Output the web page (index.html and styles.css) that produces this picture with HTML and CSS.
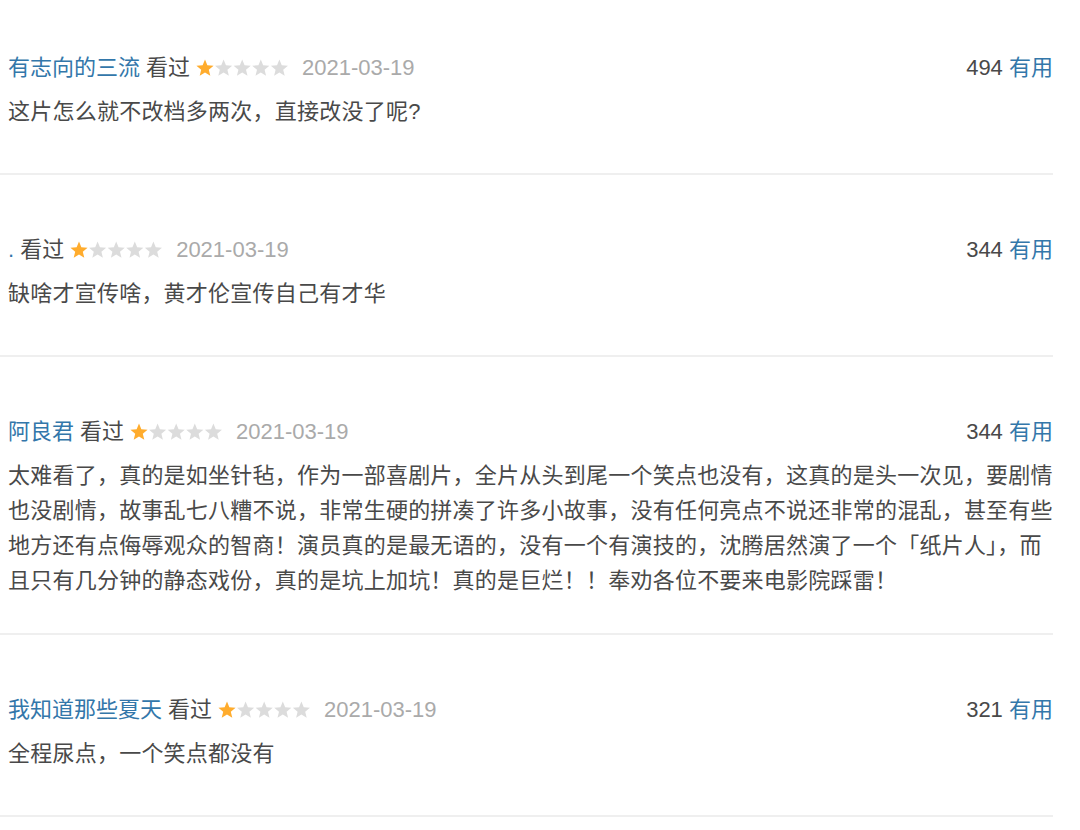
FILE: index.html
```html
<!DOCTYPE html>
<html lang="zh-CN">
<head>
<meta charset="utf-8">
<title>短评</title>
<link rel="stylesheet" href="styles.css">
</head>
<body>
<svg class="defs" width="0" height="0" aria-hidden="true">
  <defs>
    <polygon id="star" points="9,0.5 11.35,6.26 17.56,6.72 12.8,10.74 14.29,16.78 9,13.5 3.71,16.78 5.2,10.74 0.44,6.72 6.65,6.26"/>
  </defs>
</svg>
<div class="list">
  <div class="item">
    <div class="head">
      <div class="info">
        <a class="user">有志向的三流</a>
        <span class="status">看过</span>
        <svg class="stars" width="93" height="18" viewBox="0 0 93 18"><use href="#star" x="0" class="on"/><use href="#star" x="18.6"/><use href="#star" x="37.2"/><use href="#star" x="55.8"/><use href="#star" x="74.4"/></svg>
        <span class="date">2021-03-19</span>
      </div>
      <div class="votes"><span class="num">494</span> <a class="useful">有用</a></div>
    </div>
    <p class="text">这片怎么就不改档多两次，直接改没了呢?</p>
  </div>
  <div class="item">
    <div class="head">
      <div class="info">
        <a class="user">.</a>
        <span class="status">看过</span>
        <svg class="stars" width="93" height="18" viewBox="0 0 93 18"><use href="#star" x="0" class="on"/><use href="#star" x="18.6"/><use href="#star" x="37.2"/><use href="#star" x="55.8"/><use href="#star" x="74.4"/></svg>
        <span class="date">2021-03-19</span>
      </div>
      <div class="votes"><span class="num">344</span> <a class="useful">有用</a></div>
    </div>
    <p class="text">缺啥才宣传啥，黄才伦宣传自己有才华</p>
  </div>
  <div class="item">
    <div class="head">
      <div class="info">
        <a class="user">阿良君</a>
        <span class="status">看过</span>
        <svg class="stars" width="93" height="18" viewBox="0 0 93 18"><use href="#star" x="0" class="on"/><use href="#star" x="18.6"/><use href="#star" x="37.2"/><use href="#star" x="55.8"/><use href="#star" x="74.4"/></svg>
        <span class="date">2021-03-19</span>
      </div>
      <div class="votes"><span class="num">344</span> <a class="useful">有用</a></div>
    </div>
    <p class="text">太难看了，真的是如坐针毡，作为一部喜剧片，全片从头到尾一个笑点也没有，这真的是头一次见，要剧情也没剧情，故事乱七八糟不说，非常生硬的拼凑了许多小故事，没有任何亮点不说还非常的混乱，甚至有些地方还有点侮辱观众的智商！演员真的是最无语的，没有一个有演技的，沈腾居然演了一个「纸片人」，而且只有几分钟的静态戏份，真的是坑上加坑！真的是巨烂！！奉劝各位不要来电影院踩雷！</p>
  </div>
  <div class="item">
    <div class="head">
      <div class="info">
        <a class="user">我知道那些夏天</a>
        <span class="status">看过</span>
        <svg class="stars" width="93" height="18" viewBox="0 0 93 18"><use href="#star" x="0" class="on"/><use href="#star" x="18.6"/><use href="#star" x="37.2"/><use href="#star" x="55.8"/><use href="#star" x="74.4"/></svg>
        <span class="date">2021-03-19</span>
      </div>
      <div class="votes"><span class="num">321</span> <a class="useful">有用</a></div>
    </div>
    <p class="text">全程尿点，一个笑点都没有</p>
  </div>
</div>
</body>
</html>
```
FILE: styles.css
```css
html, body {
  margin: 0;
  padding: 0;
  background: #fff;
}
body {
  font-family: "Liberation Sans", "Noto Sans CJK SC", sans-serif;
  font-size: 22px;
  line-height: 35px;
  color: #494949;
}
.defs {
  position: absolute;
  width: 0;
  height: 0;
}
.list {
  width: 1053px;
}
.item {
  padding: 57px 0 35px 8px;
  border-bottom: 2px solid #efefef;
}
.item:first-child {
  padding-top: 50px;
}
.head {
  display: flex;
  justify-content: space-between;
  align-items: center;
}
.info {
  display: flex;
  align-items: center;
  white-space: nowrap;
}
.user {
  color: #3377aa;
  text-decoration: none;
  margin-right: 6px;
}
.status {
  margin-right: 6px;
}
.stars {
  display: block;
  margin-right: 13px;
  fill: #dcdcdc;
}
.stars .on {
  fill: #ffac2d;
}
.date {
  color: #aaaaaa;
}
.votes {
  white-space: nowrap;
}
.useful {
  color: #3377aa;
  text-decoration: none;
}
.text {
  margin: 9px 0 0;
  min-height: 44px;
  letter-spacing: 0.23px;
}
```
